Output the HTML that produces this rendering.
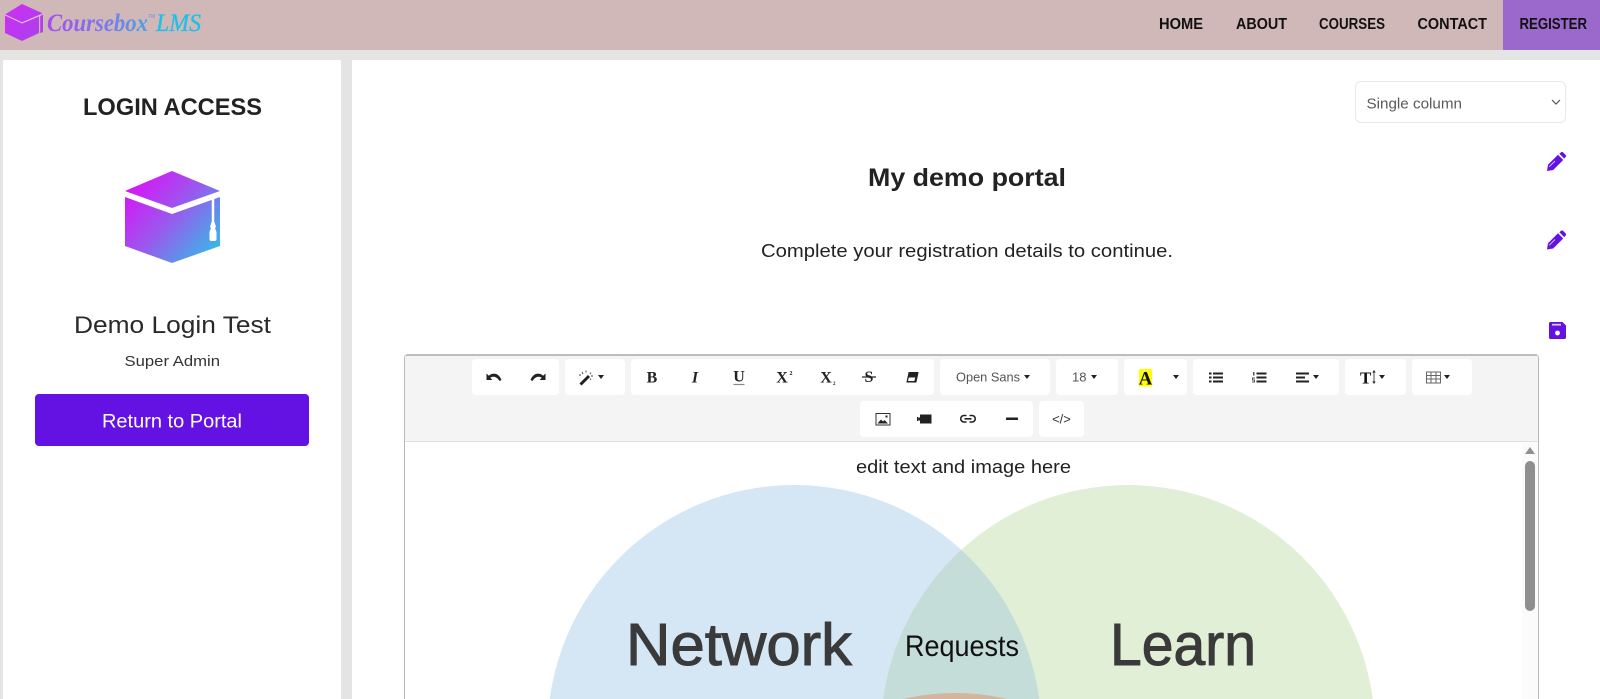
<!DOCTYPE html>
<html lang="en"><head><meta charset="utf-8"><title>Coursebox LMS</title>
<style>
html,body{margin:0;padding:0;width:1600px;height:699px;overflow:hidden;background:#e4e4e4;font-family:"Liberation Sans",sans-serif}
#p{position:absolute;left:0;top:0;width:1600px;height:699px;overflow:hidden}
.b{position:absolute}
.g{position:absolute;background:#fff;border-radius:4px}
svg{position:absolute;left:0;top:0;display:block}
</style></head><body><div id="p">
<div class="b" style="left:0;top:0;width:1600px;height:50px;background:#d0b8b8"></div>
<div class="b" style="left:1503px;top:0;width:97px;height:50px;background:#9b68cc"></div>
<div class="b" style="left:3px;top:60px;width:338px;height:639px;background:#fff"></div>
<div class="b" style="left:352px;top:60px;width:1248px;height:639px;background:#fff"></div>
<div class="b" style="left:35px;top:394px;width:274px;height:52px;background:#6412e4;border-radius:4px"></div>
<div class="b" style="left:1355px;top:81px;width:209px;height:40px;border:1.500px solid #e8e8e8;border-radius:6px;background:#fff"></div>
<div class="b" style="left:404px;top:354px;width:1133px;height:343px;border:1px solid #b8b8b8;border-top:2px solid #bdbdbd;border-bottom:0;border-radius:4px 4px 0 0;background:#fff"></div>
<div class="b" style="left:405px;top:356px;width:1133px;height:85px;background:#f4f4f4;border-bottom:1px solid #e0e0e0"></div>
<div class="b" style="left:1522px;top:443px;width:16px;height:256px;background:#fbfbfb"></div>
<div class="g" style="left:472px;top:359px;width:87px;height:36px"></div>
<div class="g" style="left:565px;top:359px;width:60px;height:36px"></div>
<div class="g" style="left:631px;top:359px;width:303px;height:36px"></div>
<div class="g" style="left:940px;top:359px;width:110px;height:36px"></div>
<div class="g" style="left:1056px;top:359px;width:62px;height:36px"></div>
<div class="g" style="left:1124px;top:359px;width:63px;height:36px"></div>
<div class="g" style="left:1193px;top:359px;width:146px;height:36px"></div>
<div class="g" style="left:1345px;top:359px;width:61px;height:36px"></div>
<div class="g" style="left:1412px;top:359px;width:60px;height:36px"></div>
<div class="g" style="left:860px;top:401px;width:173px;height:36px"></div>
<div class="g" style="left:1039px;top:401px;width:45px;height:36px"></div>

<svg width="1600" height="699" viewBox="0 0 1600 699" xmlns="http://www.w3.org/2000/svg">
<defs>
<linearGradient id="cube" gradientUnits="userSpaceOnUse" x1="132" y1="178" x2="214" y2="250"><stop offset="0" stop-color="#dc10f8"/><stop offset="0.5" stop-color="#9a58ee"/><stop offset="1" stop-color="#3cb4e8"/></linearGradient>
<linearGradient id="cube2" gradientUnits="userSpaceOnUse" x1="5" y1="4" x2="43" y2="41"><stop offset="0" stop-color="#d02cf6"/><stop offset="1" stop-color="#a644e8"/></linearGradient>
<linearGradient id="logo" gradientUnits="userSpaceOnUse" x1="47" y1="0" x2="190" y2="0"><stop offset="0" stop-color="#a64df0"/><stop offset="0.5" stop-color="#6f86e6"/><stop offset="1" stop-color="#1cc6e8"/></linearGradient>
<clipPath id="cb"><circle cx="794.500" cy="732" r="247"/></clipPath>
<clipPath id="cg"><circle cx="1128" cy="732" r="247"/></clipPath>
</defs>

<!-- logo -->
<path d="M22 4 43 13.500 22 22.500 5 14.500Z" fill="url(#cube2)"/>
<path d="M5 15.500 22 23.500 39 16.500V33L22 41 5 33Z" fill="url(#cube2)"/>
<path d="M40.200 16 43 14.500V32L40.200 33Z" fill="#b040e8"/>
<path d="M5 14.800 22 22.800 43 13.800" fill="none" stroke="#e8b8f4" stroke-width="1"/>
<text x="47" y="31" font-family="'Liberation Serif',serif" font-style="italic" font-weight="bold" font-size="25" fill="url(#logo)" textLength="101" lengthAdjust="spacingAndGlyphs">Coursebox</text>
<text x="148" y="18" font-size="5" fill="#7c8ae0">TM</text>
<text x="156" y="31" font-family="'Liberation Serif',serif" font-style="italic" font-size="25" fill="#1fc0e8" stroke="#1fc0e8" stroke-width=".3" textLength="45" lengthAdjust="spacingAndGlyphs">LMS</text>

<!-- nav -->
<g font-weight="bold" font-size="15.500" fill="#111">
<text x="1159" y="29" textLength="44" lengthAdjust="spacingAndGlyphs">HOME</text>
<text x="1236" y="29" textLength="51" lengthAdjust="spacingAndGlyphs">ABOUT</text>
<text x="1319" y="29" textLength="66" lengthAdjust="spacingAndGlyphs">COURSES</text>
<text x="1417.500" y="29" textLength="69.500" lengthAdjust="spacingAndGlyphs">CONTACT</text>
<text x="1519.500" y="29" textLength="67.500" lengthAdjust="spacingAndGlyphs">REGISTER</text>
</g>

<!-- sidebar -->
<text x="83" y="115" font-weight="bold" font-size="24" fill="#222" textLength="179" lengthAdjust="spacingAndGlyphs">LOGIN ACCESS</text>
<g>
<path d="M172 171 220 191 172 208 125 191Z" fill="url(#cube)"/>
<path d="M125 197 172 214 220 197V246L172 263 125 246Z" fill="url(#cube)"/>
<path d="M213 198V222" stroke="#fff" stroke-width="2.500"/>
<path d="M211.500 222h3l1.500 5-1 1 1.500 4v7a2 2 0 0 1-2 2h-3a2 2 0 0 1-2-2v-7l1.500-4-1-1z" fill="#fff"/>
</g>
<text x="74" y="333" font-size="24" fill="#2a2a2a" textLength="197" lengthAdjust="spacingAndGlyphs">Demo Login Test</text>
<text x="124.500" y="366" font-size="15" fill="#333" textLength="95.500" lengthAdjust="spacingAndGlyphs">Super Admin</text>
<text x="102" y="427.500" font-size="19" fill="#fff" textLength="140" lengthAdjust="spacingAndGlyphs">Return to Portal</text>

<!-- main header -->
<text x="1366.500" y="108.500" font-size="15" fill="#5a5a5a" textLength="95.500" lengthAdjust="spacingAndGlyphs">Single column</text>
<path d="M1552 100l4 4 4-4" fill="none" stroke="#555" stroke-width="1.200"/>
<text x="868" y="186" font-weight="bold" font-size="25" fill="#222" textLength="198" lengthAdjust="spacingAndGlyphs">My demo portal</text>
<text x="761" y="257" font-size="18.500" fill="#222" textLength="412" lengthAdjust="spacingAndGlyphs">Complete your registration details to continue.</text>

<!-- pencils -->
<g fill="#6412e4">
<g transform="translate(1547 152)"><path d="M0 19 1 12.800 11 2.800 16.200 8 6.200 18ZM12.400 1.800 13.800.500a1.700 1.700 0 0 1 2.400 0L18.500 2.800a1.700 1.700 0 0 1 0 2.400L17.200 6.600Z"/><path d="M2.200 14.800 8 9" stroke="#fff" stroke-width=".7"/></g>
<g transform="translate(1547 230.500)"><path d="M0 19 1 12.800 11 2.800 16.200 8 6.200 18ZM12.400 1.800 13.800.500a1.700 1.700 0 0 1 2.400 0L18.500 2.800a1.700 1.700 0 0 1 0 2.400L17.200 6.600Z"/><path d="M2.200 14.800 8 9" stroke="#fff" stroke-width=".7"/></g>
<g transform="translate(1549 322)"><path d="M1.500 0H13.500L17 3.500V15.500a1.500 1.500 0 0 1-1.500 1.500H1.500A1.500 1.500 0 0 1 0 15.500V1.500A1.500 1.500 0 0 1 1.500 0Z"/><rect x="3" y="1.800" width="9" height="1.800" fill="#d8c4fa"/><circle cx="8.500" cy="11" r="2.400" fill="#fff"/></g>
</g>

<!-- toolbar row 1 -->
<g fill="#222">
<path transform="translate(486.500 372.500)" d="M0 1V7.500H6L3.800 5.400C6 3.600 10 3.600 13 8.500L15 7.500C12 0 6 0 2.400 3.200Z"/>
<path transform="translate(545.500 372.500) scale(-1 1)" d="M0 1V7.500H6L3.800 5.400C6 3.600 10 3.600 13 8.500L15 7.500C12 0 6 0 2.400 3.200Z"/>
<path d="M580.500 384.500 589 376" stroke="#222" stroke-width="3"/>
<path d="M582 372l1 2M586 370.500v2M591 372.500l-1 1.500M593 376h-2M591 380l-1-1.500M579 375h2" stroke="#444" stroke-width=".9"/>
<path d="M598 375h6l-3 4Z"/>
<g font-family="'Liberation Serif',serif" font-weight="bold" font-size="16" text-anchor="middle">
<text x="652" y="382.500">B</text>
<text x="695" y="382.500" font-style="italic">I</text>
<text x="739" y="381.500">U</text>
<text x="782" y="382.500">X</text>
<text x="826" y="382.500">X</text>
<text x="869" y="382">S</text>
</g>
<path d="M733.500 384.500h11" stroke="#888" stroke-width="1.200"/>
<text x="789.500" y="375" font-size="6" font-weight="bold" font-family="'Liberation Serif',serif">2</text>
<text x="833" y="385" font-size="5" font-weight="bold" font-family="'Liberation Serif',serif">2</text>
<path d="M862 377h14" stroke="#222" stroke-width="1.200"/>
<path d="M909 372.500h9l-2 9.500h-9Z" stroke="#222" stroke-width="1" fill="#222"/><path d="M908.800 377.500h6.500l-1 3.500h-6.300Z" fill="#fff"/>
<text x="956" y="381.500" font-size="13" fill="#555" textLength="64" lengthAdjust="spacingAndGlyphs">Open Sans</text>
<path d="M1024 375h6l-3 4Z"/>
<text x="1072" y="381.500" font-size="13" fill="#555" textLength="14.500" lengthAdjust="spacingAndGlyphs">18</text>
<path d="M1091 375h6l-3 4Z"/>
<rect x="1139" y="369" width="13" height="17.500" fill="#ff0"/>
<text x="1145.500" y="384.500" font-family="'Liberation Serif',serif" font-weight="bold" font-size="19" text-anchor="middle" fill="#111">A</text>
<path d="M1173 375h6l-3 4Z"/>
<g transform="translate(1209 372)"><path d="M0 .5h2.500v2H0zM4 .5h10v2H4zM0 4.500h2.500v2H0zM4 4.500h10v2H4zM0 8.500h2.500v2H0zM4 8.500h10v2H4z"/></g>
<g transform="translate(1252 372)"><path d="M4.500 .5h10v2h-10zM4.500 4.500h10v2h-10zM4.500 8.500h10v2h-10z"/><path d="M1 0h1.500v3.500H1zM0 5.500h3v1H1v1h2v3H0v-1h2v-1H0z" fill="#555"/></g>
<g transform="translate(1296 372)"><path d="M0 .5h13v2H0zM0 4.500h9v2H0zM0 8.500h13v2H0z"/></g>
<path d="M1313 375h6l-3 4Z"/>
<text x="1360" y="383.500" font-family="'Liberation Serif',serif" font-weight="bold" font-size="17" fill="#111">T</text>
<path d="M1374 371v12" stroke="#333" stroke-width=".9"/><path d="M1372.300 372.500l1.700-2.500 1.700 2.500ZM1372.300 381.500l1.700 2.500 1.700-2.500Z"/>
<path d="M1379 375h6l-3 4Z"/>
<g fill="none" stroke="#666" stroke-width="1"><rect x="1426.500" y="372" width="14" height="11"/><path d="M1431 372v11M1436 372v11M1426.500 375.500h14M1426.500 379h14"/></g>
<path d="M1444 375h6l-3 4Z"/>

<!-- toolbar row 2 -->
<rect x="876" y="413.500" width="14" height="11.500" fill="none" stroke="#333" stroke-width="1"/>
<path d="M877.500 423.500l3.500-4 2 2 1.500-1.500 3.500 3.500Z"/><rect x="885.500" y="415.500" width="2" height="2"/>
<rect x="920" y="414.500" width="11.500" height="9" fill="#222"/><path d="M918 419l2-2v4Z"/><rect x="917" y="417" width="1.500" height="4"/>
<g fill="none" stroke="#222" stroke-width="1.600"><path d="M966.500 415.500h-2.500a3 3 0 0 0 0 6.500h2.500M969.500 415.500h2.500a3 3 0 0 1 0 6.500h-2.500M964.500 418.800h7"/></g>
<rect x="1006" y="417.500" width="12" height="2.500"/>
<text x="1061.500" y="423.500" font-size="13" text-anchor="middle" fill="#333">&lt;/&gt;</text>
</g>

<!-- editor content -->
<text x="856" y="473" font-size="18.500" fill="#222" textLength="215" lengthAdjust="spacingAndGlyphs">edit text and image here</text>
<circle cx="794.500" cy="732" r="247" fill="#d5e6f5"/>
<circle cx="1128" cy="732" r="247" fill="#e0efd6"/>
<g clip-path="url(#cb)"><circle cx="1128" cy="732" r="247" fill="#c5ddd9"/><circle cx="955" cy="921" r="228" fill="#d2b59c" clip-path="url(#cg)"/></g>
<g fill="#3a3a3a" font-size="59">
<text x="626" y="665" textLength="226" lengthAdjust="spacingAndGlyphs" stroke="#3a3a3a" stroke-width="1">Network</text>
<text x="1110" y="665" textLength="146" lengthAdjust="spacingAndGlyphs" stroke="#3a3a3a" stroke-width="1">Learn</text>
</g>
<text x="905" y="656" font-size="30" fill="#111" textLength="114" lengthAdjust="spacingAndGlyphs">Requests</text>

<!-- scrollbar -->
<path d="M1530 447l5 7h-10Z" fill="#8f8f8f"/>
<rect x="1525" y="461" width="10" height="150" rx="5" fill="#8f8f8f"/>
</svg>
</div></body></html>
